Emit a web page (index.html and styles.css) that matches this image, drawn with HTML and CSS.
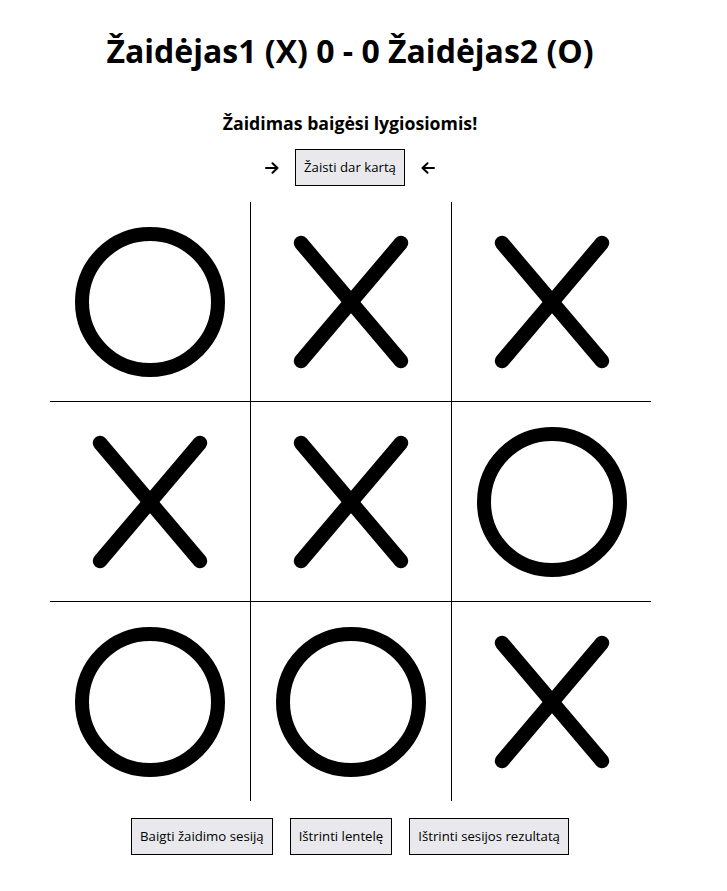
FILE: index.html
```html
<!DOCTYPE html>
<html lang="lt">
<head>
<meta charset="utf-8">
<title>Kryžiukai nuliukai</title>
<link rel="stylesheet" href="styles.css">
</head>
<body>
<main class="game">
  <h1 class="score">Žaidėjas1 (X) 0 - 0 Žaidėjas2 (O)</h1>
  <h3 class="status">Žaidimas baigėsi lygiosiomis!</h3>
  <div class="replay">
    <svg class="arrow" viewBox="0 0 14 12"><path d="M1 6H12.5M7.5 1.2L12.5 6L7.5 10.8"/></svg>
    <button class="btn">Žaisti dar kartą</button>
    <svg class="arrow" viewBox="0 0 14 12"><path d="M13 6H1.5M6.5 1.2L1.5 6L6.5 10.8"/></svg>
  </div>
  <div class="board">
    <div class="cell"><svg class="mark" viewBox="0 0 200 200"><circle cx="100" cy="100" r="68" /></svg></div>
    <div class="cell"><svg class="mark" viewBox="0 0 200 200"><line x1="50" y1="41" x2="150" y2="159"/><line x1="150" y1="41" x2="50" y2="159"/></svg></div>
    <div class="cell"><svg class="mark" viewBox="0 0 200 200"><line x1="50" y1="41" x2="150" y2="159"/><line x1="150" y1="41" x2="50" y2="159"/></svg></div>
    <div class="cell"><svg class="mark" viewBox="0 0 200 200"><line x1="50" y1="41" x2="150" y2="159"/><line x1="150" y1="41" x2="50" y2="159"/></svg></div>
    <div class="cell"><svg class="mark" viewBox="0 0 200 200"><line x1="50" y1="41" x2="150" y2="159"/><line x1="150" y1="41" x2="50" y2="159"/></svg></div>
    <div class="cell"><svg class="mark" viewBox="0 0 200 200"><circle cx="100" cy="100" r="68" /></svg></div>
    <div class="cell"><svg class="mark" viewBox="0 0 200 200"><circle cx="100" cy="100" r="68" /></svg></div>
    <div class="cell"><svg class="mark" viewBox="0 0 200 200"><circle cx="100" cy="100" r="68" /></svg></div>
    <div class="cell"><svg class="mark" viewBox="0 0 200 200"><line x1="50" y1="41" x2="150" y2="159"/><line x1="150" y1="41" x2="50" y2="159"/></svg></div>
  </div>
  <div class="actions">
    <button class="btn">Baigti žaidimo sesiją</button>
    <button class="btn">Ištrinti lentelę</button>
    <button class="btn">Ištrinti sesijos rezultatą</button>
  </div>
</main>
</body>
</html>
```

FILE: styles.css
```css
html, body {
  margin: 0;
  padding: 0;
  background: #ffffff;
}

body {
  font-family: "Open Sans", "Noto Sans", sans-serif;
  color: #000;
}

.game {
  width: 700px;
  text-align: center;
  padding-top: 1px;
}

.score {
  font-size: 32px;
  font-weight: 700;
  margin: 28px 0 0;
  line-height: 44px;
}

.status {
  font-size: 17.7px;
  font-weight: 700;
  margin: 38px 0 0;
  line-height: 24px;
}

.replay {
  display: flex;
  justify-content: center;
  align-items: center;
  gap: 16px;
  margin-top: 14px;
}

.arrow {
  width: 14px;
  height: 12px;
  display: block;
  flex: none;
}

.arrow path {
  fill: none;
  stroke: #000;
  stroke-width: 2;
  stroke-linecap: round;
  stroke-linejoin: round;
}

.btn {
  font-family: "Open Sans", "Noto Sans", sans-serif;
  font-size: 13.2px;
  line-height: 19px;
  color: #000;
  background: #e9e9ed;
  border: 1px solid #000;
  border-radius: 0;
  padding: 8px 8px;
  margin: 0;
}

.board {
  display: grid;
  grid-template-columns: 201px 201px 199px;
  grid-template-rows: 200px 200px 199px;
  width: 601px;
  margin: 16px auto 0 50px;
}

.cell {
  display: flex;
  align-items: center;
  justify-content: center;
  overflow: visible;
}

.cell:nth-child(3n+1),
.cell:nth-child(3n+2) {
  border-right: 1px solid #000;
}

.cell:nth-child(-n+6) {
  border-bottom: 1px solid #000;
}

.mark {
  width: 200px;
  height: 200px;
  flex: none;
  display: block;
}

.mark circle {
  fill: none;
  stroke: #000;
  stroke-width: 14;
}

.mark line {
  stroke: #000;
  stroke-width: 14.5;
  stroke-linecap: round;
}

.actions {
  display: flex;
  justify-content: center;
  gap: 17px;
  margin-top: 17px;
}
```
